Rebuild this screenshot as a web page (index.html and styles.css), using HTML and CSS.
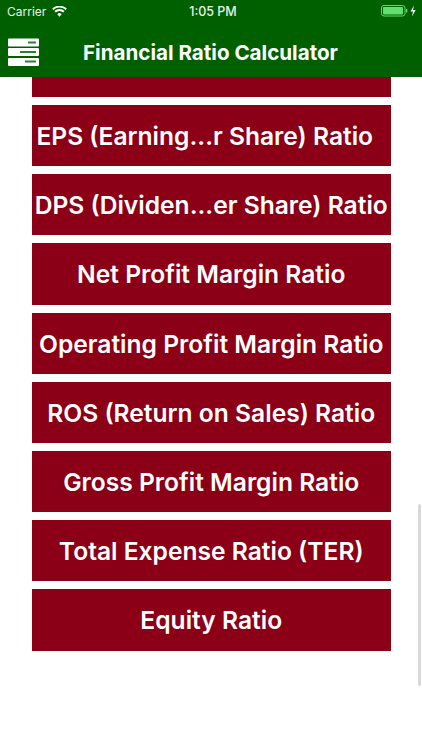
FILE: index.html
```html
<!DOCTYPE html>
<html lang="en">
<head>
<meta charset="utf-8">
<title>Financial Ratio Calculator</title>
<link rel="stylesheet" href="styles.css">
</head>
<body>
<div class="app">
  <header class="header">
    <div class="status">
      <div class="status-left">
        <span>Carrier</span>
        <svg class="wifi" viewBox="0 0 16 12" width="15" height="11"><path d="M8 11.6 5.6 8.9a3.4 3.4 0 0 1 4.8 0zM3.9 7.1 2.5 5.5a8 8 0 0 1 11 0l-1.400 1.600a5.900 5.900 0 0 0-8.200 0zM1.400 4.300 0 2.800a11.700 11.700 0 0 1 16 0l-1.400 1.500a9.600 9.600 0 0 0-13.200 0z" fill="#fff"/></svg>
      </div>
      <span class="time">1:05 PM</span>
      <div class="status-right">
        <svg viewBox="0 0 36 14" width="36" height="14"><rect x="0.500" y="1.500" width="23.500" height="10.500" rx="2.500" fill="none" stroke="#63d86f" stroke-width="1"/><rect x="2" y="3" width="20" height="7.500" rx="1" fill="#5fe070"/><rect x="25" y="5" width="1.300" height="3.500" fill="#63d86f"/><path d="M33 1.500 29.500 7.500H32L31 12.500 34.700 6H32z" fill="#fff"/></svg>
      </div>
    </div>
    <div class="nav">
      <svg class="menu" viewBox="0 0 31 28" width="31" height="28">
        <path fill="#fff" d="M1 .5h29a1 1 0 0 1 1 1v6a1 1 0 0 1-1 1H1a1 1 0 0 1-1-1v-6a1 1 0 0 1 1-1zM1 10h29a1 1 0 0 1 1 1v6a1 1 0 0 1-1 1H1a1 1 0 0 1-1-1v-6a1 1 0 0 1 1-1zM1 20h29a1 1 0 0 1 1 1v6a1 1 0 0 1-1 1H1a1 1 0 0 1-1-1v-6a1 1 0 0 1 1-1z"/>
        <path stroke="#2c7f35" stroke-width="2" d="M20 4.500h8M12 14h16M17 23.500h11"/>
      </svg>
      <h1 class="title">Financial Ratio Calculator</h1>
    </div>
  </header>
  <main class="list">
    <div class="btn btn-cut"></div>
    <div class="btn btn-left">EPS (Earning...r Share) Ratio</div>
    <div class="btn">DPS (Dividen...er Share) Ratio</div>
    <div class="btn">Net Profit Margin Ratio</div>
    <div class="btn">Operating Profit Margin Ratio</div>
    <div class="btn">ROS (Return on Sales) Ratio</div>
    <div class="btn">Gross Profit Margin Ratio</div>
    <div class="btn">Total Expense Ratio (TER)</div>
    <div class="btn">Equity Ratio</div>
    <div class="scrollbar"></div>
  </main>
</div>
</body>
</html>
```
FILE: styles.css
```css
* { box-sizing: border-box; }
html, body { margin: 0; padding: 0; }
body { width: 422px; height: 750px; overflow: hidden; background: #fff; font-family: Inter, "Liberation Sans", sans-serif; }
.app { display: flex; flex-direction: column; height: 750px; }
.header { height: 77px; background: #006000; color: #fff; flex: none; }
.status { height: 22px; position: relative; display: flex; align-items: center; justify-content: space-between; padding: 0 5px 0 7px; font-size: 12px; color: #e8f2e8; }
.status-left { display: flex; align-items: center; gap: 6px; }
.wifi { display: block; }
.time { position: absolute; left: 4px; right: 0; text-align: center; font-size: 12.500px; font-weight: 500; }
.status-right { display: flex; align-items: center; }
.status-right svg { display: block; }
.nav { display: flex; align-items: center; padding: 5px 0 0 8px; height: 55px; }
.menu { display: block; flex: none; }
.title { margin: 3px 0 0 44px; font-size: 20.600px; font-weight: 700; line-height: 1; white-space: nowrap; }
.list { flex: 1; position: relative; display: flex; flex-direction: column; gap: 8px; padding: 0 31px 0 31.500px; overflow: hidden; }
.btn { height: 61.200px; background: #8b0017; color: #fff; font-size: 24.600px; font-weight: 600; line-height: 63px; text-align: center; white-space: nowrap; flex: none; }
.btn-cut { height: 20px; }
.btn-left { padding-right: 13px; }
.scrollbar { position: absolute; right: 1.500px; top: 427px; width: 2.500px; height: 182px; background: #d9d9d9; border-radius: 2px; }
```
